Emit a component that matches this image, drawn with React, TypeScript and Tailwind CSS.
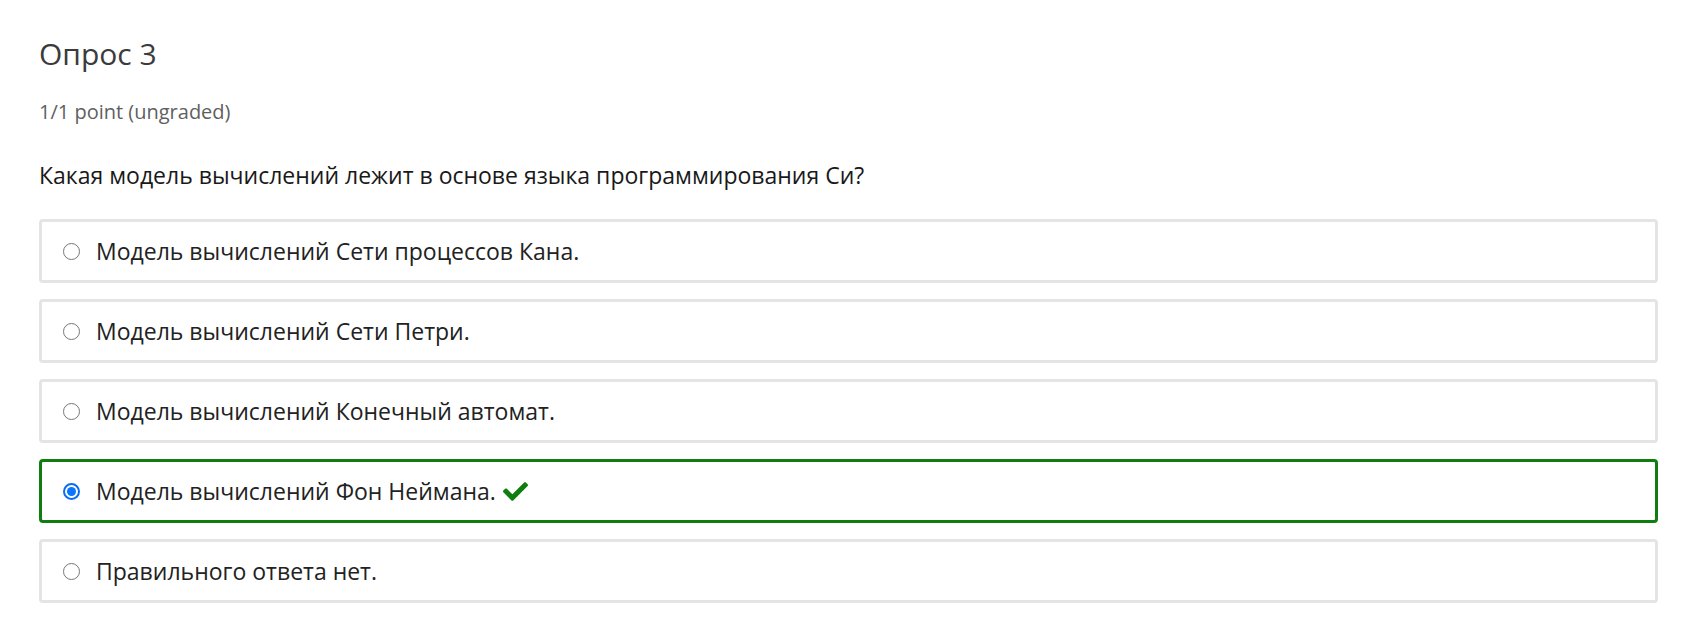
import React from "react";
import { FaCheck } from "react-icons/fa";

const options = [
  { text: "Модель вычислений Сети процессов Кана.", checked: false },
  { text: "Модель вычислений Сети Петри.", checked: false },
  { text: "Модель вычислений Конечный автомат.", checked: false },
  { text: "Модель вычислений Фон Неймана.", checked: true },
  { text: "Правильного ответа нет.", checked: false },
];

function Radio({ checked }: { checked: boolean }) {
  if (checked) {
    return (
      <span className="shrink-0 w-[17px] h-[17px] mr-[16px] rounded-full border-[2px] border-[#0a6cf0] bg-white flex items-center justify-center">
        <span className="w-[9px] h-[9px] rounded-full bg-[#0a75ff]" />
      </span>
    );
  }
  return (
    <span className="shrink-0 w-[17px] h-[17px] mr-[16px] rounded-full border border-[#767676] bg-white" />
  );
}

export default function App() {
  return (
    <div
      className="w-[1681px] h-[634px] bg-white overflow-hidden pl-[39px] pr-[23px] pt-[36px]"
      style={{ fontFamily: '"Open Sans", "Noto Sans", sans-serif' }}
    >
      <h3 className="text-[30px] leading-[36px] text-[#3b3b3b] font-normal">Опрос 3</h3>
      <div className="mt-[28px] text-[20px] leading-[24px] text-[#5f5f5f]">1/1 point (ungraded)</div>
      <p className="mt-[36px] text-[23px] leading-[30px] text-[#191919]">
        Какая модель вычислений лежит в основе языка программирования Си?
      </p>
      <div className="mt-[29px] flex flex-col gap-[16px]">
        {options.map((o, i) => (
          <div
            key={i}
            className={
              o.checked
                ? "h-[64px] flex items-center rounded-[4px] border-[3px] border-[#0f7d0f] pl-[21px]"
                : "h-[64px] flex items-center rounded-[4px] border-[3px] border-[#e4e4e4] pl-[21px]"
            }
          >
            <Radio checked={o.checked} />
            <span className="text-[23px] leading-[30px] text-[#222]">{o.text}</span>
            {o.checked && <FaCheck className="ml-[7px] text-[#0f7d0f] w-[25px] h-[25px]" />}
          </div>
        ))}
      </div>
    </div>
  );
}
